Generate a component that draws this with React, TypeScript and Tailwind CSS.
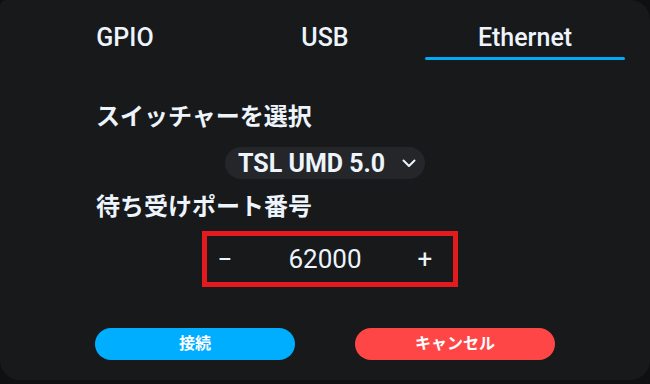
import React from "react";

export default function App() {
  const font = { fontFamily: 'Roboto, "Noto Sans CJK JP", sans-serif' };
  return (
    <div className="w-[650px] h-[384px] bg-[#0f1011]" style={font}>
      <div className="w-[650px] h-[380px] bg-[#18191b] rounded-[20px] rounded-tl-[6px] px-[25px] text-[#edf4fc] flex flex-col">
        <div className="grid grid-cols-3 h-[60px] pt-[23px]">
          {["GPIO", "USB", "Ethernet"].map((t, i) => (
            <div key={t} className="flex flex-col items-center">
              <div className="text-[25px] font-medium leading-[30px] h-[30px]">{t}</div>
              {i === 2 ? <div className="w-full h-[3px] mt-[4px] bg-[#03a9f4] rounded-full" /> : null}
            </div>
          ))}
        </div>
        <div className="pl-[71px] mt-[41px] h-[32px] text-[24px] font-bold leading-[32px]">スイッチャーを選択</div>
        <div className="flex justify-center mt-[14px]">
          <div className="w-[200px] h-[32px] rounded-full bg-[#242629] flex items-center pl-[13px] pr-[6px]">
            <span className="text-[25px] font-bold leading-none">TSL UMD 5.0</span>
            <svg className="ml-[17px]" width="14" height="14" viewBox="0 0 14 14" fill="none" stroke="currentColor" strokeWidth="2" strokeLinecap="round" strokeLinejoin="round">
              <path d="M1.5 4.5l5.5 5.5 5.5-5.5" />
            </svg>
          </div>
        </div>
        <div className="pl-[71px] mt-[12px] h-[32px] text-[24px] font-bold leading-[32px]">待ち受けポート番号</div>
        <div className="flex justify-center mt-[8px]">
          <div className="w-[256px] h-[56px] border-[5px] border-[#e31b1f] flex items-center pl-[8px] pr-[18px] ml-[10px]">
            <span className="text-[26px] leading-none w-[20px] text-center">−</span>
            <span className="flex-1 text-center text-[26px] leading-none">62000</span>
            <span className="text-[26px] leading-none w-[20px] text-center">+</span>
          </div>
        </div>
        <div className="flex justify-center gap-[60px] mt-[41px]">
          <button className="w-[200px] h-[32px] rounded-full bg-[#00aeff] text-white text-[16px] font-bold leading-none">接続</button>
          <button className="w-[200px] h-[32px] rounded-full bg-[#ff4646] text-white text-[16px] font-bold leading-none">キャンセル</button>
        </div>
      </div>
    </div>
  );
}
